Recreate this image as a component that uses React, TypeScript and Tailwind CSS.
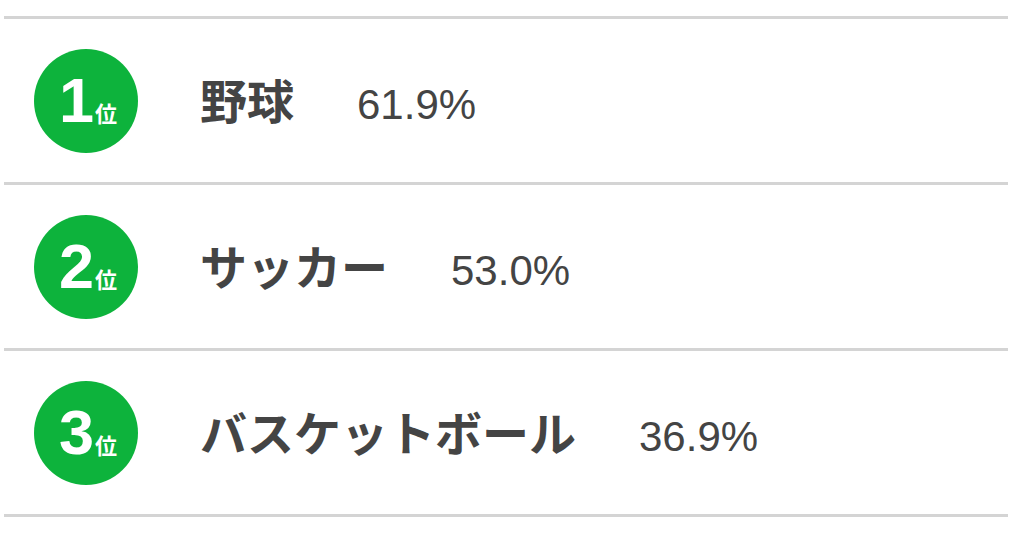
const ranks = [
  { rank: 1, name: '野球', pct: '61.9%' },
  { rank: 2, name: 'サッカー', pct: '53.0%' },
  { rank: 3, name: 'バスケットボール', pct: '36.9%' },
]

export default function App() {
  return (
    <div className="w-[1016px] h-[542px] bg-white pt-4 pl-1 pr-2 overflow-hidden">
      <ul className="border-t-[3px] border-[#d4d4d4]">
        {ranks.map((r) => (
          <li
            key={r.rank}
            className="h-[166px] border-b-[3px] border-[#d4d4d4] flex items-center pl-[30px]"
          >
            <div className="w-[104px] h-[104px] rounded-full bg-[#0db33c] flex items-center justify-center text-white font-bold pl-1">
              <div className="flex items-baseline">
                <span className="text-[63px] leading-none [font-family:'Liberation_Sans',sans-serif]">{r.rank}</span>
                <span className="text-[22px] leading-none ml-[1px] [font-family:'Noto_Sans_CJK_JP',sans-serif]">位</span>
              </div>
            </div>
            <div className="flex items-baseline ml-[62px] text-[#444]">
              <span className="text-[47px] font-semibold leading-none [font-family:'Noto_Sans_CJK_JP',sans-serif]">
                {r.name}
              </span>
              <span className="text-[42px] leading-none ml-[63px] [font-family:'Liberation_Sans',sans-serif]">
                {r.pct}
              </span>
            </div>
          </li>
        ))}
      </ul>
    </div>
  )
}
